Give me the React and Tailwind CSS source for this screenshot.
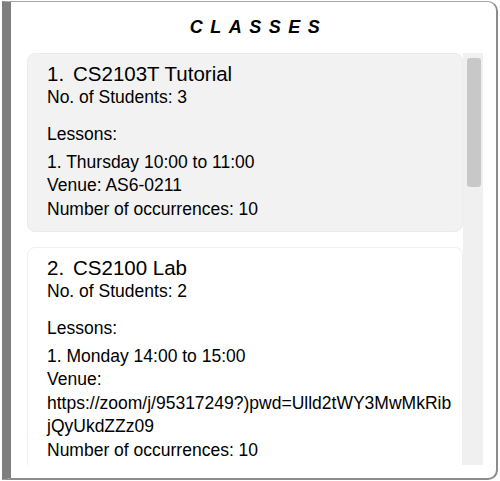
const classes = [
  {
    id: 1,
    name: 'CS2103T Tutorial',
    students: 3,
    lessons: [
      { day: 'Thursday 10:00 to 11:00', venue: 'AS6-0211', occurrences: 10 },
    ],
    tone: 'bg-[#f2f2f2] border-[#ebebeb]',
  },
  {
    id: 2,
    name: 'CS2100 Lab',
    students: 2,
    lessons: [
      {
        day: 'Monday 14:00 to 15:00',
        venue: 'https://zoom/j/95317249?)pwd=Ulld2tWY3MwMkRibjQyUkdZZz09',
        occurrences: 10,
      },
    ],
    tone: 'bg-white border-[#efefef]',
  },
];

function ClassCard({ item }) {
  return (
    <div className={`rounded-[8px] border pl-[19px] pr-[8px] pt-[8px] pb-[10px] ${item.tone}`}>
      {/* Header */}
      <div className="flex text-[20.5px] leading-[24px]">
        <span className="w-[26px]">{item.id}.</span>
        <span>{item.name}</span>
      </div>
      <p>No. of Students: {item.students}</p>

      {/* Lessons */}
      <p className="mt-[13px]">Lessons:</p>
      <div className="mt-[4.5px]">
        {item.lessons.map((l, i) => (
          <div key={i}>
            <p>{i + 1}. {l.day}</p>
            <p className="break-words">Venue: {l.venue}</p>
            <p>Number of occurrences: {l.occurrences}</p>
          </div>
        ))}
      </div>
    </div>
  );
}

export default function App() {
  return (
    <div className="w-[500px] h-[481px] bg-white pl-[2px] pt-[1px] font-['Liberation_Sans',Arial,sans-serif] text-black">
      <div className="w-[496px] h-[479px] flex flex-col border-l-[9px] border-l-[#7f7f7f] border-t border-r-2 border-b-2 border-t-[#a6a6a6] border-r-[#8c8c8c] border-b-[#8c8c8c] rounded-tr-[10px] rounded-br-[10px]">
        {/* Title */}
        <div className="h-[51px] flex items-center justify-center pl-[10px]">
          <h1 className="text-[18px] font-bold italic tracking-[7.5px]">CLASSES</h1>
        </div>

        {/* List */}
        <div className="flex h-[412px] pl-[16px]">
          <div className="w-[436px] overflow-hidden flex flex-col gap-[15px] text-[17.5px] leading-[23.5px]">
            {classes.map((c) => (
              <ClassCard key={c.id} item={c} />
            ))}
          </div>
          {/* Scrollbar */}
          <div className="w-[20px] bg-[#f0f0f0] pt-[5px] pl-[4px] pr-[2px]">
            <div className="h-[129px] rounded-[3px] bg-[#c8c8c8]" />
          </div>
        </div>
      </div>
    </div>
  );
}
